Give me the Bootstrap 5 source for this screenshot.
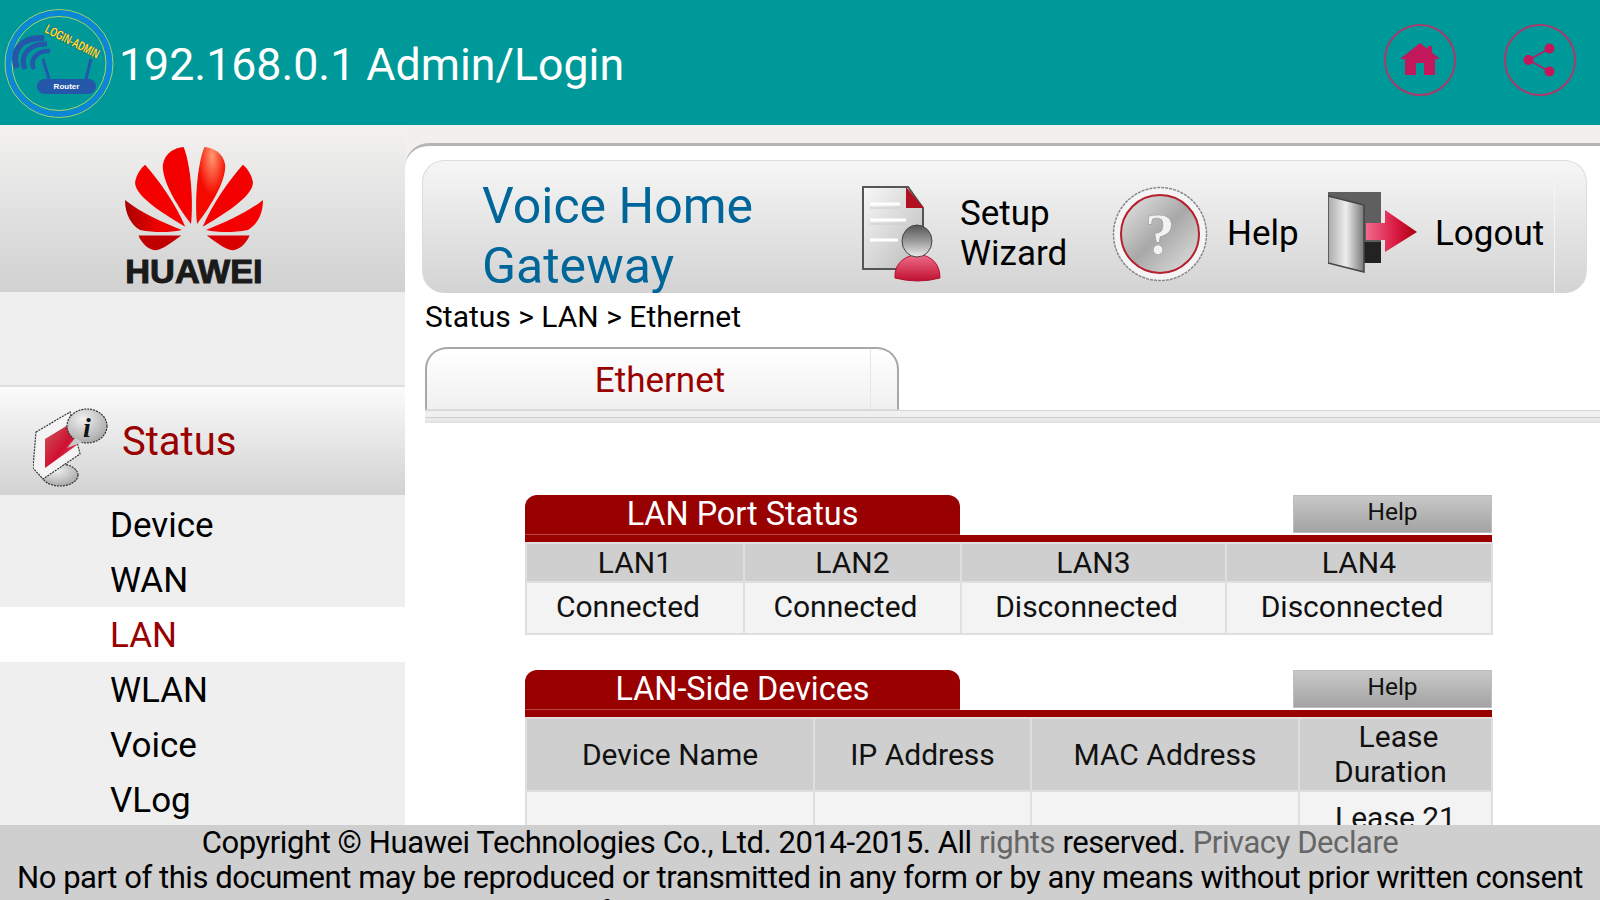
<!DOCTYPE html>
<html lang="en">
<head>
<meta charset="utf-8">
<title>192.168.0.1 Admin/Login</title>
<link rel="stylesheet" href="https://cdn.jsdelivr.net/npm/bootstrap@5.3.0/dist/css/bootstrap.min.css">
<style>
html,body{height:100%;margin:0;overflow:hidden}
body{font-family:Roboto,"Liberation Sans",sans-serif;color:#000;background:#fff}
.shell{width:1600px;height:900px}
.topbar{height:125px;background:#009999;flex:none}
.applogo{width:112px;height:112px;margin-left:3px}
.apptitle{font-size:44.7px;color:#fff;margin-left:4px;line-height:1;margin-top:6px}
.roundbtn{width:72px;height:72px;border:2px solid #a83a6c;border-radius:50%;margin-top:-6px}
.roundgap{gap:48px;padding-right:24px}
.mainrow{height:700px;flex:none;overflow:hidden}
.sidecol{width:405px;flex:none;background:#efefef}
.brandbox{height:167px;background:linear-gradient(#f3f2f1,#d1d1d1);padding:12px 18px 0 0}
.brandmark{overflow:visible}
.sidespace{height:95px;border-bottom:2px solid #dedede}
.statushead{height:108px;background:linear-gradient(#fbfbfb,#d2d2d2);padding-left:33px}
.statushead svg{margin-top:14px}
.statushead span{font-size:40px;color:#990000;margin-left:11px;margin-top:2px}
.sidelist{padding-top:2px}
.sideitem{height:55px;padding-left:110px;font-size:35px;line-height:58px;color:#000}
.sideitem.on{background:#fff;color:#990000}
.contentcol{min-width:0;background:#fff}
.toparea{background:#f1f0ef;padding-top:18px;flex:none}
.panel{height:150px;background:#fff;border-top:3px solid #b5b5b5;border-top-left-radius:24px;padding:14px 13px 0 17px;overflow:hidden}
.gwbar{height:133px;border:1px solid #dcdcdc;border-bottom:0;border-radius:22px;background:linear-gradient(#f6f6f6,#d3d3d3);overflow:hidden;padding-left:59px;position:relative}
.gwbar::after{content:"";position:absolute;right:31px;top:0;bottom:0;width:1px;background:#f4f4f4}
.gwtitle{width:378px;flex:none;font-size:50px;line-height:60px;color:#006699;padding-top:15px}
.gwitem{font-size:35px;line-height:40px;padding-top:14px}
.gwfirst{width:252px}
.gwsecond{width:216px}
.gwicon-a{margin-right:18px}
.gwicon-b{margin-right:19px}
.gwicon-c{margin-right:15px}
.crumb{font-size:30px;line-height:34px;padding:7px 0 0 20px}
.tabwrap{margin:13px 0 0 20px}
.tabcap{width:474px;height:63px;border:2px solid #a8a8a8;border-bottom:1px solid #ddd;border-radius:22px 22px 0 0;background:linear-gradient(#fff,#f0f0f0);color:#990000;font-size:35px;line-height:64px;text-align:center;padding-right:4px;position:relative}
.tabcap::after{content:"";position:absolute;right:26px;top:0;bottom:0;width:1px;background:#e6e6e6}
.tabrule{height:13px;background:linear-gradient(#f0f0f0 0,#f0f0f0 50%,#c8c8c8 55%,#f0f0f0 65%,#dedede 100%);border-top:1px solid #d6d6d6}
.tablezone{padding:72px 0 0 120px;width:1087px}
.blockhead{height:47px;border-bottom:7px solid #990000}
.redtab{width:435px;height:40px;background:#990000;color:#fff;border-radius:12px 12px 0 0;font-size:32.4px;line-height:38px;text-align:center;box-shadow:inset 0 -1px 0 #b5474a}
.helpbtn{width:199px;height:38px;background:linear-gradient(#c8c8c8,#a3a3a3);border:1px solid #bdbdbd;font-size:24.5px;line-height:31px;text-align:center;color:#111}
.porttable,.devtable{table-layout:fixed;width:966px;border-collapse:collapse;margin:0}
.porttable td,.devtable td{border:2px solid #dfdfdf;padding:0;text-align:center;font-size:30px;color:#111;vertical-align:middle}
.hd td{background:#cfcfcf;line-height:34px}
.bd td{background:#f3f3f3;line-height:36px}
.porttable .hd td{height:39px}
.porttable .bd td{height:52px;padding-right:14px;padding-bottom:2px}
.devtable .hd td{height:73px;line-height:35px;padding-bottom:1px}
.devtable .bd td{height:60px;line-height:36px;vertical-align:top;padding-top:8px}
.leasetop{padding-left:6px}
.leasebot{padding-right:10px}
.second{margin-top:35px}
.footbar{height:75px;flex:none;background:#cfcfcf;font-size:31px;line-height:35px;text-align:center;overflow:hidden;white-space:nowrap}
.footbar span.dim{color:#666}
.footline{letter-spacing:-.42px}
.footwide{letter-spacing:-.455px}
</style>
</head>
<body>
<div class="shell d-flex flex-column">
  <header class="topbar d-flex align-items-center justify-content-between">
    <div class="d-flex align-items-center">
      <svg class="applogo" viewBox="0 0 112 112">
        <circle cx="56" cy="56.500" r="54" fill="none" stroke="#a7d07a" stroke-width="1"/>
        <circle cx="56" cy="56.500" r="50.500" fill="none" stroke="#0c86d8" stroke-width="5"/>
        <circle cx="56" cy="56.500" r="47" fill="none" stroke="#a7d07a" stroke-width="1"/>
        <g fill="none" stroke="#2456aa">
          <path d="M14 61C7 42 20 30 41 31" stroke-width="6"/>
          <path d="M22 62C16 48 27 36 44 37" stroke-width="5"/>
          <path d="M31 62C26 53 34 43 47 44" stroke-width="4.500"/>
          <path d="M40 52L46 72M88 52L83 72" stroke-width="3"/>
        </g>
        <rect x="34" y="72" width="59" height="15" rx="7.500" fill="#2456aa"/>
        <text x="63.500" y="82" text-anchor="middle" font-family="Liberation Sans" font-weight="700" font-size="8" fill="#fff">Router</text>
        <text x="41" y="25" transform="rotate(27 41 25)" font-family="Liberation Sans" font-weight="700" font-size="13" fill="#ffe21a" stroke="#1d3f96" stroke-width=".9" paint-order="stroke" textLength="59" lengthAdjust="spacingAndGlyphs">LOGIN-ADMIN</text>
      </svg>
      <div class="apptitle">192.168.0.1 Admin/Login</div>
    </div>
    <div class="d-flex roundgap">
      <div class="roundbtn d-flex align-items-center justify-content-center">
        <svg width="42" height="36" viewBox="0 0 42 36"><path fill="#c2185b" d="M21 1L29 7V4H33V10.500L41 17H36V33H25V21H17V33H6V17H1Z"/></svg>
      </div>
      <div class="roundbtn d-flex align-items-center justify-content-center">
        <svg width="34" height="36" viewBox="0 0 34 36"><g fill="#c2185b"><circle cx="5.500" cy="18" r="5"/><circle cx="26.500" cy="6.500" r="5"/><circle cx="26.500" cy="29.500" r="5"/></g><path d="M26.500 6.500L5.500 18L26.500 29.500" fill="none" stroke="#c2185b" stroke-width="1.500"/></svg>
      </div>
    </div>
  </header>

  <div class="mainrow d-flex">
    <aside class="sidecol">
      <div class="brandbox d-flex align-items-center justify-content-center">
        <svg width="138" height="138" viewBox="0 0 412 410" class="brandmark">
          <defs>
            <linearGradient id="pl" x1="0" y1="0" x2="1" y2="0"><stop offset="0" stop-color="#a80000"/><stop offset=".6" stop-color="#f00000"/></linearGradient>
            <radialGradient id="pt" cx=".55" cy=".12" r=".5"><stop offset="0" stop-color="#ff9a70"/><stop offset="1" stop-color="#f50a00"/></radialGradient>
          </defs>
          <path fill="#f40000" d="M197 232C150 170 110 100 113 55C118 20 150 3 175 2C195 50 205 160 197 232Z"/>
          <path fill="#f40000" d="M180 240C120 205 30 150 30 108C33 85 48 65 60 55C100 100 150 170 180 240Z"/>
          <path fill="url(#pl)" d="M0 160C0 205 20 235 45 250C90 258 130 258 170 250C110 225 50 200 0 160Z"/>
          <path fill="#c00000" d="M40 266H168C140 285 115 308 90 310C70 308 50 290 40 266Z"/>
          <path fill="url(#pt)" d="M215 232C262 170 302 100 299 55C294 20 262 3 237 2C217 50 207 160 215 232Z"/>
          <path fill="#f40000" d="M232 240C292 205 382 150 382 108C379 85 364 65 352 55C312 100 262 170 232 240Z"/>
          <path fill="#f40000" d="M412 160C412 205 392 235 367 250C322 258 282 258 242 250C302 225 362 200 412 160Z"/>
          <path fill="#d80000" d="M372 266H244C272 285 297 308 322 310C342 308 362 290 372 266Z"/>
          <text x="206" y="408" text-anchor="middle" font-family="Liberation Sans" font-weight="700" font-size="98" fill="#1a1a1a" stroke="#1a1a1a" stroke-width="3" textLength="410" lengthAdjust="spacingAndGlyphs">HUAWEI</text>
        </svg>
      </div>
      <div class="sidespace"></div>
      <div class="statushead d-flex align-items-center">
        <svg width="78" height="80" viewBox="0 0 78 80">
          <defs><linearGradient id="scr" x1="0" y1="0" x2="1" y2="1"><stop offset="0" stop-color="#c9595f"/><stop offset=".55" stop-color="#d01030"/><stop offset="1" stop-color="#f26088"/></linearGradient>
          <radialGradient id="gr" cx=".4" cy=".3" r=".8"><stop offset="0" stop-color="#f0f0f0"/><stop offset="1" stop-color="#a0a0a0"/></radialGradient></defs>
          <ellipse cx="27" cy="67" rx="18" ry="11" fill="url(#gr)" stroke="#333" stroke-width="1.200" stroke-dasharray="2 1"/>
          <path d="M3 24L37 4L47 46L10 71L0 60Z" fill="#f4f4f4" stroke="#333" stroke-width="1.200" stroke-dasharray="2 1"/>
          <path d="M12 31L35 17L44 37L12 60Z" fill="url(#scr)"/>
          <ellipse cx="54" cy="18" rx="20" ry="17" fill="url(#gr)" stroke="#333" stroke-width="1.200" stroke-dasharray="2 1"/>
          <path d="M42 30L34 40L50 34Z" fill="#c8c8c8"/>
          <text x="54" y="29" text-anchor="middle" font-family="Liberation Serif" font-weight="700" font-style="italic" font-size="28" fill="#111">i</text>
        </svg>
        <span>Status</span>
      </div>
      <div class="sidelist">
        <div class="sideitem">Device</div>
        <div class="sideitem">WAN</div>
        <div class="sideitem on">LAN</div>
        <div class="sideitem">WLAN</div>
        <div class="sideitem">Voice</div>
        <div class="sideitem">VLog</div>
      </div>
    </aside>

    <section class="contentcol flex-grow-1">
      <div class="toparea">
        <div class="panel">
          <div class="gwbar d-flex">
            <div class="gwtitle">Voice Home Gateway</div>
            <div class="gwitem gwfirst d-flex align-items-center">
              <svg width="82" height="96" viewBox="0 0 82 96" class="gwicon-a">
                <defs>
                  <linearGradient id="pg" x1="0" y1="0" x2="1" y2="1"><stop offset="0" stop-color="#f8f8f8"/><stop offset="1" stop-color="#b9b9b9"/></linearGradient>
                  <linearGradient id="pr" x1="0" y1="0" x2="0" y2="1"><stop offset="0" stop-color="#f0708c"/><stop offset="1" stop-color="#c01030"/></linearGradient>
                  <linearGradient id="ph" x1="0" y1="0" x2="0" y2="1"><stop offset="0" stop-color="#555"/><stop offset=".5" stop-color="#999"/><stop offset="1" stop-color="#eee"/></linearGradient>
                </defs>
                <path d="M3 1H48L63 22V83H3Z" fill="url(#pg)" stroke="#555" stroke-width="2"/>
                <path d="M46 1L64 22H46Z" fill="#b01020"/>
                <path d="M10 18H40M10 34H46M10 54H38" stroke="#fff" stroke-width="3"/>
                <path d="M10 22H40M10 38H46" stroke="#ccc" stroke-width="1"/>
                <path d="M35 92C34 78 44 70 58 68C72 70 80 78 80 92Q58 98 35 92Z" fill="url(#pr)" stroke="#b01030" stroke-width="1"/>
                <ellipse cx="57" cy="55" rx="15" ry="16" fill="url(#ph)" stroke="#444" stroke-width="1"/>
              </svg>
              <div>Setup<br>Wizard</div>
            </div>
            <div class="gwitem gwsecond d-flex align-items-center">
              <svg width="96" height="96" viewBox="0 0 96 96" class="gwicon-b">
                <defs><linearGradient id="hg" x1="0" y1="0" x2="1" y2="1"><stop offset="0" stop-color="#e8e8e8"/><stop offset=".5" stop-color="#a8a8a8"/><stop offset="1" stop-color="#e4e4e4"/></linearGradient></defs>
                <circle cx="48" cy="48" r="46.500" fill="#f4f4f4" stroke="#888" stroke-width="1.500" stroke-dasharray="3 1"/>
                <circle cx="48" cy="48" r="39" fill="url(#hg)" stroke="#b5202c" stroke-width="2"/>
                <text x="48" y="68" text-anchor="middle" font-family="Liberation Serif" font-weight="700" font-size="60" fill="#f2f2f2" stroke="#999" stroke-width=".6">?</text>
              </svg>
              <div>Help</div>
            </div>
            <div class="gwitem d-flex align-items-center">
              <svg width="92" height="84" viewBox="0 0 92 84" class="gwicon-c">
                <defs><linearGradient id="dg" x1="0" y1="0" x2="1" y2="0"><stop offset="0" stop-color="#aaa"/><stop offset=".5" stop-color="#eee"/><stop offset="1" stop-color="#777"/></linearGradient>
                <linearGradient id="ar" x1="0" y1="0" x2="1" y2="0"><stop offset="0" stop-color="#f26a8c"/><stop offset=".6" stop-color="#d81840"/><stop offset="1" stop-color="#a80010"/></linearGradient></defs>
                <rect x="0" y="0" width="53" height="71" fill="#5f5f5f"/>
                <rect x="36" y="50" width="17" height="21" fill="#222"/>
                <path d="M0 4L36 13V80L0 71Z" fill="url(#dg)" stroke="#444" stroke-width="1.500"/>
                <path d="M38 31H57V18L89 40L57 60V48H38Z" fill="url(#ar)"/>
              </svg>
              <div>Logout</div>
            </div>
          </div>
        </div>
      </div>
      <div class="crumb">Status &gt; LAN &gt; Ethernet</div>
      <div class="tabwrap">
        <div class="tabcap">Ethernet</div>
        <div class="tabrule"></div>
      </div>
      <div class="tablezone">
        <div class="blockhead d-flex justify-content-between align-items-start">
          <div class="redtab">LAN Port Status</div>
          <div class="helpbtn">Help</div>
        </div>
        <table class="porttable">
          <colgroup><col style="width:218px"><col style="width:217px"><col style="width:265px"><col style="width:266px"></colgroup>
          <tr class="hd"><td>LAN1</td><td>LAN2</td><td>LAN3</td><td>LAN4</td></tr>
          <tr class="bd"><td>Connected</td><td>Connected</td><td>Disconnected</td><td>Disconnected</td></tr>
        </table>
        <div class="blockhead d-flex justify-content-between align-items-start second">
          <div class="redtab">LAN-Side Devices</div>
          <div class="helpbtn">Help</div>
        </div>
        <table class="devtable">
          <colgroup><col style="width:288px"><col style="width:217px"><col style="width:268px"><col style="width:193px"></colgroup>
          <tr class="hd"><td>Device Name</td><td>IP Address</td><td>MAC Address</td><td><span class="leasetop">Lease</span><br><span class="leasebot">Duration</span></td></tr>
          <tr class="bd"><td></td><td></td><td></td><td>Lease 21</td></tr>
        </table>
      </div>
    </section>
  </div>

  <footer class="footbar">
    <div class="footline">Copyright © Huawei Technologies Co., Ltd. 2014-2015. All <span class="dim">rights</span> reserved. <span class="dim">Privacy Declare</span></div>
    <div class="footwide">No part of this document may be reproduced or transmitted in any form or by any means without prior written consent</div>
    <div class="footline">of Huawei Technologies Co., Ltd.</div>
  </footer>
</div>
<script src="https://cdn.jsdelivr.net/npm/bootstrap@5.3.0/dist/js/bootstrap.bundle.min.js"></script>
</body>
</html>
